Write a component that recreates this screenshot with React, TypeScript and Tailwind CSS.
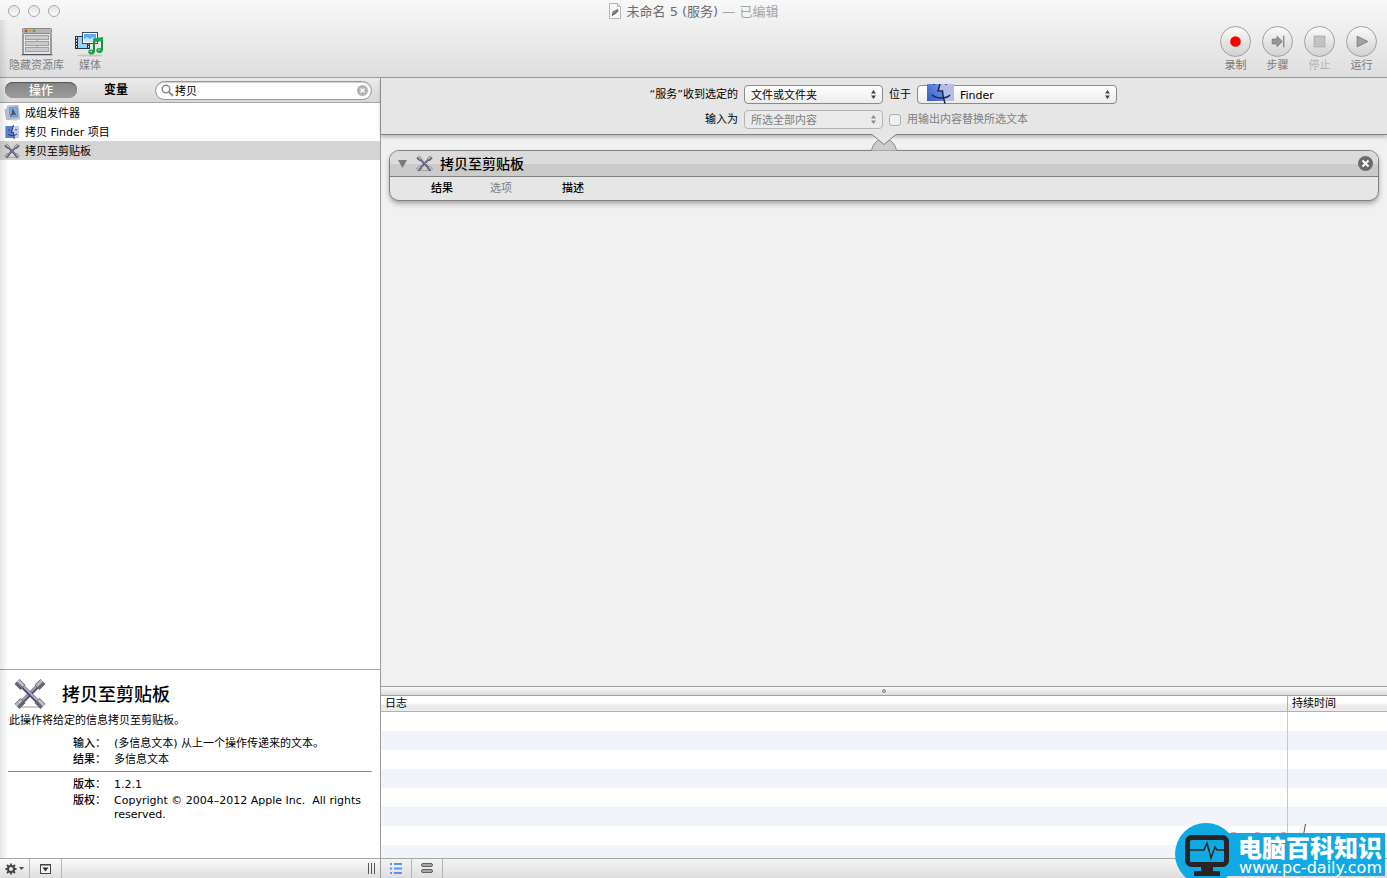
import React from 'react';

interface Action {
  id: string;
  name: string;
  icon: React.ReactNode;
}

const ToolsIcon: React.FC<{ className?: string }> = ({ className }) => (
  <svg viewBox="0 0 32 32" className={className} aria-hidden="true">
    <rect x="6" y="28" width="20" height="2" rx="1" fill="#000" opacity="0.2" />
    <path d="M25 7L7 25" stroke="#5c5768" strokeWidth="4" />
    <path d="M24.500 6.500L6.500 24.500" stroke="#aca6c0" strokeWidth="1.600" />
    <path d="M29 3.500L23 9.500M9 22.500L3 28.500" stroke="#686472" strokeWidth="7" />
    <path d="M28 2.500L22.500 8M7.500 22L2 27.500" stroke="#bbb8c6" strokeWidth="3" />
    <path d="M7 7L25 25" stroke="#4d4760" strokeWidth="4" />
    <path d="M7.500 6.500L25.500 24.500" stroke="#b6a9dc" strokeWidth="1.800" />
    <path d="M3 3.500L9 9.500M23 22.500L29 28.500" stroke="#686472" strokeWidth="7" />
    <path d="M4 2.500L9.500 8M24.500 22L30 27.500" stroke="#bfbccb" strokeWidth="3" />
  </svg>
);

const FinderIcon: React.FC<{ className?: string }> = ({ className }) => (
  <svg viewBox="0 0 16 16" className={className} aria-hidden="true">
    <rect x="1.500" y="2" width="13.500" height="12" fill="#c3cdee" />
    <path d="M1.500 2h7.500L7.500 8.500h2l.5 5.500H1.500z" fill="#5a7fd6" />
    <path d="M9.500 1L7.300 8.500h2.200l.8 6.500" fill="none" stroke="#26335c" strokeWidth="1" />
    <path d="M4 10c2 2 6.500 2 9 0M5 5v1.700M12 5v1.700" fill="none" stroke="#26335c" strokeWidth="1" />
  </svg>
);

const StampIcon: React.FC<{ className?: string }> = ({ className }) => (
  <svg viewBox="0 0 16 16" className={className} aria-hidden="true">
    <path d="M3.500 1L14 .5l1.500 13.500-11-.5z" fill="#d8dcea" stroke="#8f95a8" strokeWidth="0.700" />
    <path d="M.5 4.500l3-1.500 1.500 11 9 .5-1 1-11-.5z" fill="#b9bccb" />
    <path d="M5 2.500l8-.5 1 10-8 .2z" fill="#7fa8e8" stroke="#4b6cb0" strokeWidth="0.600" />
    <path d="M8 4l1.500 1 3 5.500-2.500-1-4 1.500 2-3z" fill="#4a4f63" />
  </svg>
);

const LibraryIcon: React.FC = () => (
  <svg width="32" height="30" viewBox="0 0 32 30" aria-hidden="true">
    <rect x="0" y="27" width="32" height="2" fill="#999" opacity="0.5" />
    <rect x="2" y="2" width="28" height="25" fill="#e6e6e6" />
    <path d="M2 27.500V7M30 27.500V7M1.500 27.500h29" stroke="#4c5160" fill="none" />
    <rect x="1.500" y="1.500" width="29" height="5" rx="1" fill="#b5b5b5" stroke="#8a8a8a" />
    <circle cx="5" cy="4" r="1.400" fill="#d9433c" />
    <circle cx="9" cy="4" r="1.400" fill="#e8a317" />
    <circle cx="13" cy="4" r="1.400" fill="#57a845" />
    {[8, 14, 20].map((y) => (
      <rect key={y} x="4.500" y={y + 0.5} width="23" height="4" fill="#cacaca" stroke="#a0a0a0" />
    ))}
    <path d="M16 12.500v2M16 18.500v2" stroke="#999" />
  </svg>
);

const MediaIcon: React.FC = () => (
  <svg width="30" height="26" viewBox="0 0 30 26" aria-hidden="true">
    <ellipse cx="15" cy="24.500" rx="13" ry="1" fill="#000" opacity="0.15" />
    <rect x="0" y="5" width="15" height="13" fill="#27364f" />
    <rect x="3" y="6" width="9" height="11" fill="#9ad2f6" />
    <path d="M1.500 6v11.500M13.500 6v11.500" stroke="#fff" strokeDasharray="1.500 1.500" />
    <rect x="7.500" y="1.500" width="15" height="11" fill="#fff" stroke="#3b4a6b" />
    <rect x="9" y="3" width="12" height="8" fill="#57aef2" />
    <path d="M9 11V8l3-2 3 2 3-2 3 2v3z" fill="#c5e5fb" />
    <path d="M19 21V9.500l8-1.500v11" fill="none" stroke="#13913f" strokeWidth="2" />
    <path d="M18 7.500l10-1.500v4l-10 1.500z" fill="#1fab4d" />
    <ellipse cx="16.500" cy="21" rx="3.200" ry="2.400" fill="#16a045" />
    <ellipse cx="24.500" cy="19.500" rx="3.200" ry="2.400" fill="#16a045" />
    <ellipse cx="16" cy="20.500" rx="1.500" ry="0.800" fill="#7be39c" />
    <ellipse cx="24" cy="19" rx="1.500" ry="0.800" fill="#7be39c" />
  </svg>
);

const SelectArrows: React.FC<{ className: string }> = ({ className }) => (
  <svg
    width="5"
    height="9"
    viewBox="0 0 5 9"
    className={`pointer-events-none absolute right-[7px] top-[5px] ${className}`}
    aria-hidden="true"
  >
    <path d="M2.500 0L5 3.500H0zM2.500 9L0 5.500h5z" fill="currentColor" />
  </svg>
);

const actions: Action[] = [
  { id: 'sender', name: '成组发件器', icon: <StampIcon className="h-4 w-4" /> },
  { id: 'finder', name: '拷贝 Finder 项目', icon: <FinderIcon className="h-4 w-4" /> },
  { id: 'clipboard', name: '拷贝至剪贴板', icon: <ToolsIcon className="h-4 w-4" /> },
];

const runControls = [
  { label: '录制', color: 'text-[#777]', icon: <circle cx="15" cy="15" r="5.500" fill="#f00" /> },
  {
    label: '步骤',
    color: 'text-[#777]',
    icon: (
      <>
        <path d="M9.500 12.500h5v-3l5.500 5.500-5.500 5.500v-3h-5z" fill="#969696" stroke="#777" strokeWidth="0.800" />
        <path d="M21.500 9v12" stroke="#666" />
      </>
    ),
  },
  {
    label: '停止',
    color: 'text-[#b4b4b4]',
    icon: <rect x="9.500" y="9.500" width="11" height="11" fill="#c4c4c4" stroke="#aaa" />,
  },
  {
    label: '运行',
    color: 'text-[#777]',
    icon: <path d="M10.500 9.500L21.500 15l-11 5.500z" fill="#a2a2a2" stroke="#777" strokeWidth="0.900" />,
  },
];

const details = [
  [
    { term: '输入：', text: '(多信息文本) 从上一个操作传递来的文本。' },
    { term: '结果：', text: '多信息文本' },
  ],
  [
    { term: '版本：', text: '1.2.1' },
    { term: '版权：', text: 'Copyright © 2004–2012 Apple Inc.  All rights reserved.' },
  ],
];

const Header: React.FC = () => (
  <header className="shrink-0 border-b border-[#9b9b9b] bg-linear-to-b from-[#f8f8f8] to-[#dedede]">
    <div className="relative flex h-[22px] items-center justify-center">
      <div className="absolute left-2 flex gap-2">
        {['关闭', '最小化', '缩放'].map((label) => (
          <button
            key={label}
            aria-label={label}
            className="h-3 w-3 rounded-full border border-[#a9a9a9] bg-linear-to-b from-[#e4e4e4] to-[#fbfbfb]"
          />
        ))}
      </div>
      <svg width="12" height="16" viewBox="0 0 12 16" className="mr-1.5" aria-hidden="true">
        <path d="M.5.500h8l3 3v12H.500z" fill="#fafafa" stroke="#b5b5b5" />
        <path d="M8.500.500v3h3" fill="none" stroke="#b5b5b5" />
        <path d="M2.500 12l1-3.500L9 5.500l.5 3-4 3.500z" fill="#8b8b8b" />
        <path d="M3 13l6-6" stroke="#5d5d5d" />
      </svg>
      <h1 className="pt-0.5 text-[13px] text-[#6c6c6c]">
        未命名 5 (服务) <span className="text-[#a5a5a5]">— 已编辑</span>
      </h1>
    </div>
    <div className="flex h-[55px] items-start justify-between pl-[9px] pr-2.5">
      <div className="flex gap-[11px] text-[11px] leading-[18px] text-[#808080]">
        <button className="flex flex-col items-center">
          <span className="flex h-[35px] items-end">
            <LibraryIcon />
          </span>
          隐藏资源库
        </button>
        <button className="flex flex-col items-center">
          <span className="flex h-[35px] items-end">
            <MediaIcon />
          </span>
          媒体
        </button>
      </div>
      <div className="flex gap-[11px] pt-1 text-[11px] leading-[18px]">
        {runControls.map((control) => (
          <button
            key={control.label}
            disabled={control.label === '停止'}
            className={`flex flex-col items-center ${control.color}`}
          >
            <span className="h-[31px] w-[31px] rounded-full border border-[#a0a0a0] bg-linear-to-b from-[#fafafa] to-[#d2d2d2]">
              <svg viewBox="0 0 30 30" className="h-full w-full" aria-hidden="true">
                {control.icon}
              </svg>
            </span>
            {control.label}
          </button>
        ))}
      </div>
    </div>
  </header>
);

const Sidebar: React.FC = () => (
  <aside className="flex w-[381px] shrink-0 flex-col border-r border-[#9b9b9b] bg-white">
    <div className="flex h-[25px] items-center border-b border-[#a6a6a6] bg-linear-to-b from-[#ececec] to-[#d8d8d8] pl-[5px] pr-2">
      <button className="h-4 w-[72px] rounded-full bg-linear-to-b from-[#858585] to-[#9b9b9b] text-[12px] font-medium leading-[18px] text-white shadow-[inset_0_1px_1px_#555]">
        操作
      </button>
      <button className="w-[78px] text-[12px] font-bold leading-[18px]">变量</button>
      <div className="relative flex-1">
        <svg width="13" height="13" viewBox="0 0 13 13" className="absolute left-1.5 top-[3px]" aria-hidden="true">
          <circle cx="5" cy="5" r="3.800" fill="none" stroke="#8c8c8c" strokeWidth="1.500" />
          <path d="M8 8l4 4" stroke="#8c8c8c" strokeWidth="2" />
        </svg>
        <input
          type="text"
          aria-label="搜索操作"
          defaultValue="拷贝"
          className="block h-[19px] w-full rounded-full border border-[#989898] bg-white pl-[19px] pr-5 text-[11px] leading-4 shadow-[inset_0_1px_1px_#ccc] outline-none"
        />
        <button aria-label="清除" className="absolute right-1 top-1 h-[11px] w-[11px]">
          <svg viewBox="0 0 11 11" className="h-full w-full" aria-hidden="true">
            <circle cx="5.500" cy="5.500" r="5.500" fill="#b4b4b4" />
            <path d="M3.500 3.500l4 4M7.500 3.500l-4 4" stroke="#fff" strokeWidth="1.300" />
          </svg>
        </button>
      </div>
    </div>

    <ul className="min-h-0 flex-1 overflow-hidden text-[11px]">
      {actions.map((action) => (
        <li
          key={action.id}
          className={`flex h-[19px] items-center gap-[5px] pl-1 ${action.id === 'clipboard' ? 'bg-[#d4d4d4]' : ''}`}
        >
          {action.icon}
          <span className="pt-0.5 leading-4">{action.name}</span>
        </li>
      ))}
    </ul>

    <section className="h-[189px] shrink-0 border-t border-[#a6a6a6] px-2 pt-2 text-[11px] leading-4">
      <div className="flex items-center gap-4 pl-1.5">
        <ToolsIcon className="h-8 w-8" />
        <h2 className="pt-0.5 text-[18px] font-medium">拷贝至剪贴板</h2>
      </div>
      <p className="mt-[3px] pl-px">此操作将给定的信息拷贝至剪贴板。</p>
      {details.map((group, i) => (
        <dl
          key={i}
          className={`grid grid-cols-[98px_1fr] gap-x-2 ${i === 0 ? 'mt-[7px] border-b border-[#8e8e8e] pb-[3px]' : 'mt-[5px]'}`}
        >
          {group.map((row) => (
            <React.Fragment key={row.term}>
              <dt className="text-right font-medium">{row.term}</dt>
              <dd className="whitespace-pre-wrap pt-px leading-[14px]">{row.text}</dd>
            </React.Fragment>
          ))}
        </dl>
      ))}
    </section>

    <footer className="flex h-5 shrink-0 items-center border-t border-[#a6a6a6] bg-linear-to-b from-[#fafafa] to-[#dedede]">
      <button aria-label="操作菜单" className="flex h-full w-[30px] items-center justify-center gap-0.5 border-r border-[#b5b5b5]">
        <svg width="12" height="12" viewBox="0 0 12 12" aria-hidden="true">
          <circle cx="6" cy="6" r="3" fill="none" stroke="#444" strokeWidth="2" />
          <path
            d="M6 .5v2M6 9.500v2M.5 6h2M9.500 6h2M2 2l1.500 1.500M8.500 8.500L10 10M10 2L8.500 3.500M3.500 8.500L2 10"
            stroke="#444"
            strokeWidth="1.800"
          />
        </svg>
        <svg width="5" height="3" viewBox="0 0 5 3" aria-hidden="true">
          <path d="M0 0h5L2.500 3z" fill="#444" />
        </svg>
      </button>
      <button aria-label="显示描述" className="flex h-full w-8 items-center justify-center border-r border-[#b5b5b5]">
        <svg width="11" height="10" viewBox="0 0 11 10" aria-hidden="true">
          <rect x="0.500" y="0.500" width="10" height="9" fill="#f4f4f4" stroke="#444" />
          <path d="M0 1h11" stroke="#444" />
          <path d="M2.500 3.500h6L5.500 7.500z" fill="#333" />
        </svg>
      </button>
      <svg width="9" height="11" viewBox="0 0 9 11" className="ml-auto mr-1" aria-hidden="true">
        <path d="M1.500 0v11M4.500 0v11M7.500 0v11" stroke="#555" />
      </svg>
    </footer>
  </aside>
);

const ServiceSettings: React.FC = () => (
  <section className="relative z-10 flex shrink-0 justify-center border-b border-[#808080] bg-[#e6e6e6] pb-[5px] pt-[7px] text-[11px] shadow-[0_2px_4px_rgba(0,0,0,0.25)]">
    <div className="grid grid-cols-[87px_139px_auto] items-center gap-1.5">
      <label htmlFor="input-type" className="flex justify-end whitespace-nowrap leading-[19px]">
        “服务”收到选定的
      </label>
      <div className="relative">
        <select
          id="input-type"
          className="block h-[19px] w-full appearance-none rounded-[4px] border border-[#8a8a8a] bg-linear-to-b from-white to-[#ececec] pl-1.5 pr-4 pt-0.5"
        >
          <option>文件或文件夹</option>
        </select>
        <SelectArrows className="text-[#444]" />
      </div>
      <div className="flex items-center gap-1.5">
        <label htmlFor="app" className="leading-[19px]">
          位于
        </label>
        <div className="relative w-[200px]">
          <select
            id="app"
            className="block h-[19px] w-full appearance-none rounded-[4px] border border-[#8a8a8a] bg-linear-to-b from-white to-[#ececec] pl-[42px] pr-4 pt-0.5"
          >
            <option>Finder</option>
          </select>
          <svg width="28" height="20" viewBox="0 0 28 20" className="pointer-events-none absolute left-[10px] top-[-1px]" aria-hidden="true">
            <defs>
              <linearGradient id="face-left" x1="0" y1="1" x2="1" y2="0">
                <stop offset="0" stopColor="#2f59c9" />
                <stop offset="1" stopColor="#7d9be6" />
              </linearGradient>
            </defs>
            <rect x="0" y="0" width="27" height="17" fill="#b4bde8" />
            <path d="M0 0h13l-2 8h4l1 9H0z" fill="url(#face-left)" />
            <path d="M13 0l-2 7h4.500l.5 5 2 7.500" fill="none" stroke="#1a2444" strokeWidth="1.500" />
            <path d="M5 11c5 4 14 4 18 0M7 0v1M19 0v1" fill="none" stroke="#1a2444" strokeWidth="1.400" />
          </svg>
          <SelectArrows className="text-[#444]" />
        </div>
      </div>

      <label htmlFor="input-as" className="text-right leading-[19px]">
        输入为
      </label>
      <div className="relative">
        <select
          id="input-as"
          disabled
          className="block h-[19px] w-full appearance-none rounded-[4px] border border-[#b4b4b4] bg-[#ebebeb] pl-1.5 pr-4 pt-0.5 text-[#7f7f7f] opacity-100"
        >
          <option>所选全部内容</option>
        </select>
        <SelectArrows className="text-[#8c8c8c]" />
      </div>
      <label className="flex items-center gap-1.5 leading-[19px] text-[#7f7f7f]">
        <input
          type="checkbox"
          disabled
          className="h-3 w-3 appearance-none rounded-[3px] border border-[#b0b0b0] bg-[#f0f0f0]"
        />
        用输出内容替换所选文本
      </label>
    </div>
    <svg width="28" height="17" viewBox="0 0 28 17" className="absolute left-1/2 top-full -translate-x-1/2" aria-hidden="true">
      <path d="M1.500 16.500C3 10 7 5 14 5s11 5 12.500 11.500" fill="#cdcdcd" stroke="#8a8a8a" />
      <path d="M2 0v.5L14 10.500 26 .5V0z" fill="#e6e6e6" />
      <path d="M2 .5l12 10L26 .5" fill="none" stroke="#808080" />
    </svg>
  </section>
);

const ActionCard: React.FC = () => (
  <article className="overflow-hidden rounded-[10px] border border-[#808080] bg-[#e6e6e6] shadow-[0_3px_5px_rgba(0,0,0,0.3)]">
    <div className="flex h-[26px] items-center border-b border-[#808080] bg-linear-to-b from-[#dbdbdb] from-50% to-[#cbcbcb] to-50% pl-2 pr-[5px]">
      <button aria-label="折叠" className="mr-2">
        <svg width="10" height="8" viewBox="0 0 10 8" aria-hidden="true">
          <path d="M0 0h9L4.500 8z" fill="#7a7a7a" />
        </svg>
      </button>
      <ToolsIcon className="mr-[7px] h-[17px] w-[17px]" />
      <h2 className="pt-0.5 text-[14px] font-medium">拷贝至剪贴板</h2>
      <button aria-label="移除" className="ml-auto h-[15px] w-[15px]">
        <svg viewBox="0 0 15 15" className="h-full w-full" aria-hidden="true">
          <circle cx="7.500" cy="7.500" r="7.500" fill="#6b6b6b" />
          <path d="M4.500 4.500l6 6M10.500 4.500l-6 6" stroke="#fff" strokeWidth="2" />
        </svg>
      </button>
    </div>
    <div className="flex h-[23px] items-center pl-[41px] pt-0.5 text-[11px] font-medium">
      <button>结果</button>
      <button disabled className="ml-[37px] font-normal text-[#808080]">
        选项
      </button>
      <button className="ml-[50px]">描述</button>
    </div>
  </article>
);

const LogPanel: React.FC = () => (
  <section className="shrink-0">
    <div className="flex h-[10px] items-center justify-center border-y border-[#a0a0a0] bg-linear-to-b from-[#fafafa] to-[#dcdcdc]">
      <span className="h-1 w-1 rounded-full border border-[#8a8a8a] bg-[#bbb]" />
    </div>
    <div className="h-[162px] overflow-hidden bg-white">
      <table className="w-full table-fixed border-separate border-spacing-0 text-[11px]">
        <thead className="bg-linear-to-b from-white from-40% to-[#ebebeb] to-60%">
          <tr className="h-4">
            <th className="border-b border-r border-[#b0b0b0] p-0 pl-1 text-left font-normal leading-[15px]">日志</th>
            <th className="w-[99px] border-b border-[#b0b0b0] p-0 pl-1 text-left font-normal leading-[15px]">持续时间</th>
          </tr>
        </thead>
        <tbody>
          {Array.from({ length: 8 }, (_, i) => (
            <tr key={i} className="h-[19px] even:bg-[#f1f5fa]">
              <td className="border-r border-[#c8c8c8] p-0" />
              <td className="p-0" />
            </tr>
          ))}
        </tbody>
      </table>
    </div>
    <footer className="flex h-5 items-center border-t border-[#a6a6a6] bg-linear-to-b from-[#f4f4f4] to-[#dedede]">
      <button aria-label="日志" className="flex h-full w-[31px] items-center justify-center border-r border-[#b5b5b5]">
        <svg width="12" height="11" viewBox="0 0 12 11" aria-hidden="true">
          <path d="M0 1h2M0 5.500h2M0 10h2M4 1h8M4 5.500h8M4 10h8" stroke="#5a92ee" strokeWidth="1.800" />
        </svg>
      </button>
      <button aria-label="变量" className="flex h-full w-[31px] items-center justify-center border-r border-[#b5b5b5]">
        <svg width="12" height="11" viewBox="0 0 12 11" aria-hidden="true">
          <rect x="0.500" y="0.500" width="11" height="3" rx="1.500" fill="#a8a8a8" stroke="#606060" />
          <rect x="0.500" y="6.500" width="11" height="3" rx="1.500" fill="#a8a8a8" stroke="#606060" />
        </svg>
      </button>
    </footer>
  </section>
);

const SiteBadge: React.FC = () => (
  <a
    href="#pc-daily"
    className="absolute bottom-0 right-[2px] z-20 block h-[55px] w-[210px] overflow-hidden text-white"
  >
    <svg width="210" height="55" viewBox="0 0 210 55" className="absolute inset-0" aria-hidden="true">
      <path d="M124 10l2-9h4l-2 9z" fill="#f5f3ea" />
      <path d="M128.500 12l2-11" stroke="#555" />
      <path d="M56 10.500a4 2 0 0 1 5 0M80 10.500a4 2 0 0 1 5 0M106 10.500a4 2 0 0 1 5 0" stroke="#d86570" strokeWidth="1.500" fill="none" />
      <circle cx="31" cy="31" r="31" fill="#10a9e2" />
      <rect x="31" y="10" width="179" height="43" fill="#10a9e2" />
      <rect x="12.500" y="14.500" width="39" height="27" rx="4" fill="#10a9e2" stroke="#2a2323" strokeWidth="5" />
      <path d="M26 43h12v5h7v5H19v-5h7z" fill="#2a2323" />
      <path d="M15 27h14l3-7 4 15 4-11 2 3h8" fill="none" stroke="#2a2323" strokeWidth="1.500" />
    </svg>
    <span className="relative flex flex-col items-end pr-[3px] pt-[14px]">
      <strong className="text-[24px] font-black leading-6">电脑百科知识</strong>
      <span className="text-[16px] leading-[14px]">www.pc-daily.com</span>
    </span>
  </a>
);

export default function App() {
  return (
    <div className="relative flex h-screen flex-col overflow-hidden bg-[#f1f1f1] font-['DejaVu_Sans','Noto_Sans_CJK_SC',sans-serif] text-black">
      <Header />
      <div className="flex min-h-0 flex-1">
        <Sidebar />
        <main className="flex min-w-0 flex-1 flex-col">
          <ServiceSettings />
          <div className="min-h-0 flex-1 px-2 pt-[15px]">
            <ActionCard />
          </div>
          <LogPanel />
        </main>
      </div>
      <div className="pointer-events-none absolute bottom-5 left-0 top-5 w-2 bg-linear-to-r from-black/10 to-transparent" />
      <SiteBadge />
    </div>
  );
}
